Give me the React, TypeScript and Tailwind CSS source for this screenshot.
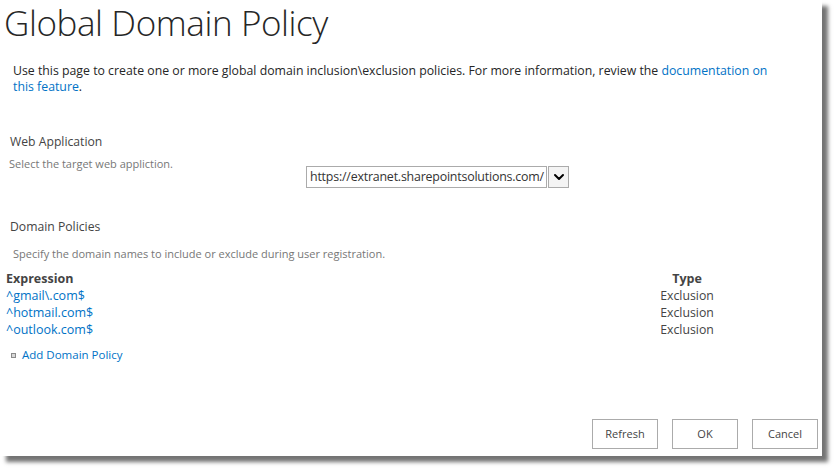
import { ChevronDown } from "lucide-react";

const policies = [
  { expression: "^gmail\\.com$", type: "Exclusion" },
  { expression: "^hotmail.com$", type: "Exclusion" },
  { expression: "^outlook.com$", type: "Exclusion" },
];

const font = "font-['Open_Sans','Noto_Sans',sans-serif]";

const Button = ({ label }: { label: string }) => (
  <button className="h-[30px] w-[66px] border border-[#ababab] bg-white text-[11px] text-[#444]">
    {label}
  </button>
);

export default function App() {
  return (
    <div className={`w-[837px] h-[472px] bg-white ${font}`}>
      <div className="w-[822px] h-[456px] bg-white shadow-[6px_6px_4px_rgba(0,0,0,0.55)] flex flex-col">
        <h1 className="pl-[4px] pt-[1px] text-[35px] leading-[44px] font-light text-[#262626] tracking-[-0.4px]">
          Global Domain Policy
        </h1>

        <p className="mt-[18px] pl-[13px] text-[12.3px] leading-[16px] text-[#262626]">
          Use this page to create one or more global domain inclusion\exclusion policies. For more information, review the{" "}
          <a className="text-[#0072c6]">documentation on</a>
          <br />
          <a className="text-[#0072c6]">this feature</a>.
        </p>

        <div className="mt-[38px] flex">
          <div className="w-[306px] pl-[9px]">
            <div className="pl-[1px] text-[12.2px] leading-[18px] text-[#444]">Web Application</div>
            <div className="mt-[5px] text-[11px] leading-[16px] text-[#777]">Select the target web appliction.</div>
          </div>
          <div className="mt-[33px] flex h-[22px] items-stretch">
            <div className="flex items-center border border-[#ababab] px-[3px] text-[12.4px] text-[#333] w-[241px] whitespace-nowrap overflow-hidden tracking-[-0.2px]">
              https://extranet.sharepointsolutions.com/
            </div>
            <div className="ml-[1px] flex w-[21px] items-center justify-center border border-[#ababab] bg-[#f4f4f4]">
              <ChevronDown className="h-[16px] w-[16px] text-black" strokeWidth={3} />
            </div>
          </div>
        </div>

        <div className="mt-[30px] pl-[10px] text-[12.2px] leading-[18px] text-[#444]">Domain Policies</div>
        <div className="mt-[10px] pl-[13px] text-[11px] leading-[16px] text-[#777]">
          Specify the domain names to include or exclude during user registration.
        </div>

        <div className="mt-[8px] pl-[6px] w-[734px] text-[12.5px] leading-[17px]">
          <div className="flex">
            <div className="flex-1 font-bold text-[#444]">Expression</div>
            <div className="w-[94px] text-center font-bold text-[#444]">Type</div>
          </div>
          {policies.map((p) => (
            <div key={p.expression} className="flex">
              <a className="flex-1 text-[#0072c6]">{p.expression}</a>
              <div className="w-[94px] text-center text-[12.3px] text-[#444]">{p.type}</div>
            </div>
          ))}
        </div>

        <div className="mt-[9px] pl-[11px] flex items-center gap-[6px]">
          <span className="block h-[5px] w-[5px] border border-[#8a8a8a] bg-[#d8d8d8]" />
          <a className="text-[11.5px] leading-[16px] text-[#0072c6]">Add Domain Policy</a>
        </div>

        <div className="mt-auto mb-[7px] mr-[4px] flex justify-end gap-[14px]">
          <Button label="Refresh" />
          <Button label="OK" />
          <Button label="Cancel" />
        </div>
      </div>
    </div>
  );
}
